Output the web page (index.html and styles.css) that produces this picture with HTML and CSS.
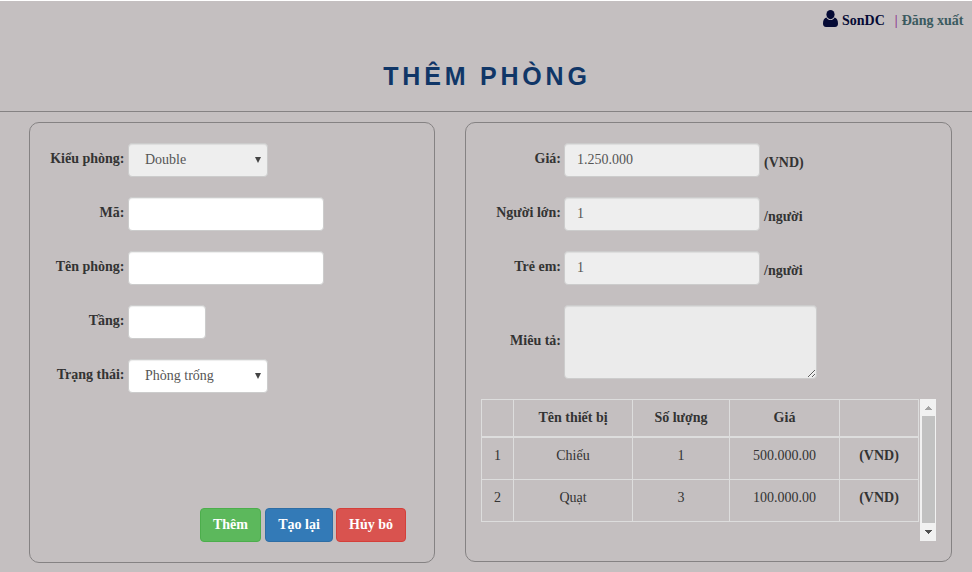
FILE: index.html
```html
<!DOCTYPE html>
<html lang="vi">
<head>
<meta charset="utf-8">
<title>Thêm phòng</title>
<link rel="stylesheet" href="styles.css">
</head>
<body>
<header class="topbar">
  <svg class="user-icon" width="15" height="17" viewBox="0 0 15 17"><ellipse cx="7.5" cy="4.6" rx="4.1" ry="4.6"/><path d="M3.4 7.5C1.2 8 0 10 0 13.5C0 15.8 1 17 3 17H12C14 17 15 15.8 15 13.5C15 10 13.8 8 11.6 7.5C10.5 9.3 9.2 10.1 7.5 10.1C5.8 10.1 4.5 9.3 3.4 7.5Z"/></svg>
  <span class="user-name">SonDC</span>
  <span class="divider">|</span>
  <a class="logout">Đăng xuất</a>
</header>
<h1 class="title">THÊM PHÒNG</h1>
<main class="panels">
  <form class="panel panel-room">
    <div class="row"><label>Kiểu phòng:</label><div class="select disabled"><span>Double</span><svg width="6" height="6" viewBox="0 0 6 6"><path d="M0 0H6L3 6Z"/></svg></div></div>
    <div class="row"><label>Mã:</label><input class="control"></div>
    <div class="row"><label>Tên phòng:</label><input class="control"></div>
    <div class="row"><label>Tầng:</label><input class="control short"></div>
    <div class="row"><label>Trạng thái:</label><div class="select"><span>Phòng trống</span><svg width="6" height="6" viewBox="0 0 6 6"><path d="M0 0H6L3 6Z"/></svg></div></div>
    <div class="actions">
      <button type="button" class="btn add">Thêm</button>
      <button type="button" class="btn reset">Tạo lại</button>
      <button type="button" class="btn cancel">Hủy bỏ</button>
    </div>
  </form>
  <section class="panel panel-type">
    <div class="row"><label>Giá:</label><input class="control" value="1.250.000" readonly><span class="unit">(VND)</span></div>
    <div class="row"><label>Người lớn:</label><input class="control" value="1" readonly><span class="unit">/người</span></div>
    <div class="row"><label>Trẻ em:</label><input class="control" value="1" readonly><span class="unit">/người</span></div>
    <div class="row row-area"><label>Miêu tả:</label><textarea class="control area" readonly></textarea></div>
    <div class="equipment">
      <table>
        <colgroup><col class="c1"><col class="c2"><col class="c3"><col class="c4"><col class="c5"></colgroup>
        <thead><tr><th></th><th>Tên thiết bị</th><th>Số lượng</th><th>Giá</th><th></th></tr></thead>
        <tbody>
          <tr><td>1</td><td>Chiếu</td><td>1</td><td>500.000.00</td><td><b>(VND)</b></td></tr>
          <tr><td>2</td><td>Quạt</td><td>3</td><td>100.000.00</td><td><b>(VND)</b></td></tr>
        </tbody>
      </table>
      <div class="scrollbar">
        <svg class="arrow up" width="7" height="4" viewBox="0 0 7 4"><path d="M3 0H4V1H5V2H6V3H7V4H0V3H1V2H2V1H3Z"/></svg>
        <div class="thumb"></div>
        <svg class="arrow down" width="7" height="4" viewBox="0 0 7 4"><path d="M0 0H7V1H6V2H5V3H4V4H3V3H2V2H1V1H0Z"/></svg>
      </div>
    </div>
  </section>
</main>
</body>
</html>
```
FILE: styles.css
```css
* { box-sizing: border-box; }
body {
  margin: 0;
  height: 572px;
  overflow: hidden;
  background: #c4bfc0;
  border-top: 1px solid #fff;
  color: #333;
  font: 14px/20px "Liberation Serif", "Times New Roman", serif;
}
.topbar {
  display: flex;
  justify-content: flex-end;
  height: 38px;
  padding: 9px 8px 0 0;
  font-weight: bold;
}
.topbar span, .topbar a { padding-top: 1px; }
.user-icon { margin-right: 4px; fill: #050a35; }
.user-name { margin-right: 10px; color: #050a35; }
.divider { margin-right: 4px; color: #800080; font-weight: normal; }
.logout { margin-right: 0.5px; color: #3b5a5f; }
.title {
  margin: 0;
  height: 73px;
  padding-left: 2px;
  border-bottom: 1px solid #858283;
  color: #103667;
  text-align: center;
  font: bold 25px/75px "Liberation Sans", Arial, sans-serif;
  letter-spacing: 3.8px;
}
.panels {
  display: flex;
  align-items: flex-start;
  gap: 30px;
  padding: 10px 20px 0 29px;
}
.panel {
  border: 1px solid #858283;
  border-radius: 10px;
  padding-top: 20px;
}
.panel-room { width: 406px; height: 441px; }
.panel-type { width: 487px; height: 440px; }
.row { display: flex; height: 34px; margin-bottom: 20px; }
label {
  width: 95px;
  margin-right: 3px;
  padding-top: 6px;
  text-align: right;
  font-weight: bold;
}
.panel-room label { width: 94.5px; margin-right: 3.5px; }
.control, .select {
  margin: 0;
  width: 196px;
  height: 34px;
  padding: 6px 12px;
  border: 1px solid #ccc;
  border-radius: 4px;
  background: #fff;
  box-shadow: inset 0 1px 1px rgba(0, 0, 0, .075);
  color: #555;
  font: inherit;
  outline: none;
}
.control.short { width: 78px; }
.select {
  display: flex;
  justify-content: space-between;
  align-items: center;
  width: 140px;
  padding: 0 6px 0 16px;
}
.select svg { fill: #444; }
.control:read-only, .select.disabled { background: #eee; }
.unit { padding: 10px 0 0 4px; font-weight: bold; }
.row-area { height: 74px; }
.row-area label { padding-top: 26px; }
.control.area { width: 253px; height: 74px; background: #ebebeb; resize: both; }
.actions { display: flex; padding: 95px 0 0 170px; }
.btn {
  height: 34px;
  padding: 0;
  border: 1px solid;
  border-radius: 4px;
  color: #fff;
  font: bold 14px/20px "Liberation Serif", "Times New Roman", serif;
}
.add { width: 61px; margin-right: 4px; background: #5cb85c; border-color: #4cae4c; }
.reset { width: 68px; margin-right: 3px; background: #337ab7; border-color: #2e6da4; }
.cancel { width: 70px; background: #d9534f; border-color: #d43f3a; }
.equipment { display: flex; gap: 1px; margin-left: 15px; }
table {
  width: 438px;
  height: 123px;
  table-layout: fixed;
  border-collapse: separate;
  border-spacing: 0;
  border: solid #ddd;
  border-width: 1px 0 0 1px;
  text-align: center;
}
.c1 { width: 32px; }
.c2 { width: 119px; }
.c3 { width: 97px; }
.c4 { width: 110px; }
.c5 { width: 79px; }
th, td {
  height: 42px;
  padding: 0 0 5px;
  border: solid #ddd;
  border-width: 0 1px 1px 0;
}
th { height: 38px; padding-bottom: 1px; border-bottom-width: 2px; }
.scrollbar {
  display: flex;
  flex-direction: column;
  align-items: center;
  justify-content: space-between;
  width: 16px;
  height: 142px;
  padding: 7px 0;
  background: #f1f1f1;
}
.thumb { width: 13px; height: 107px; margin: -1px 0 0 1px; background: #c1c1c1; }
.up { fill: #a3a3a3; }
.down { fill: #505050; }
```
